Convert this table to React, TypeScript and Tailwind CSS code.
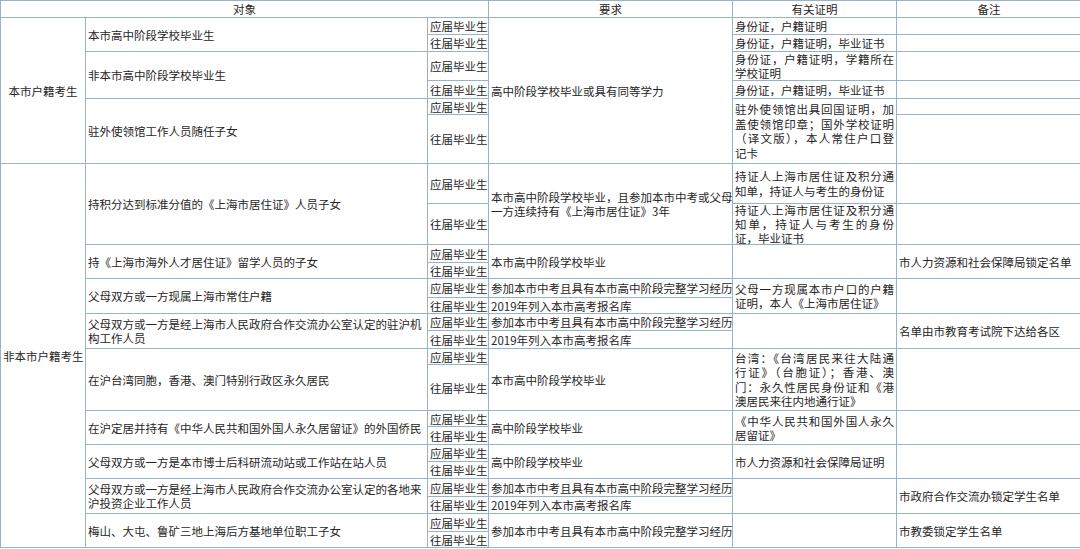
import React from "react";

const B = "border border-[#98b4c4]";
const td = `${B} px-[2px] py-0 whitespace-nowrap`;

function Lines({ lines, squeeze }: { lines: string[]; squeeze?: boolean }) {
  return (
    <div className={squeeze ? "leading-[14px] -my-[2px]" : "leading-[14.5px]"}>
      {lines.map((l, i) => (
        <div
          key={i}
          className={
            i < lines.length - 1 ? "text-justify [text-align-last:justify]" : "text-left"
          }
        >
          {l}
        </div>
      ))}
    </div>
  );
}

const Y = () => <td className={td}>应届毕业生</td>;
const W = () => <td className={td}>往届毕业生</td>;
const E = ({ rs = 1 }: { rs?: number }) => <td rowSpan={rs} className={td}></td>;

export default function App() {
  return (
    <div className="w-[1080px] h-[549px] overflow-hidden bg-white">
      <table
        className="table-fixed border-collapse w-[1081px] text-[11.5px] leading-[14px] text-[#262626]"
        style={{ fontFamily: "'Noto Sans CJK SC', 'Noto Sans', sans-serif" }}
      >
        <colgroup>
          <col className="w-[85px]" />
          <col className="w-[342px]" />
          <col className="w-[61px]" />
          <col className="w-[244px]" />
          <col className="w-[164px]" />
          <col className="w-[185px]" />
        </colgroup>
        <tbody>
          {/* header */}
          <tr className="h-[17px]">
            <td colSpan={3} className={`${td} text-center`}>对象</td>
            <td className={`${td} text-center`}>要求</td>
            <td className={`${td} text-center`}>有关证明</td>
            <td className={`${td} text-center`}>备注</td>
          </tr>

          {/* 本市户籍考生 */}
          <tr className="h-[17px]">
            <td rowSpan={6} className={`${td} text-center`}>本市户籍考生</td>
            <td rowSpan={2} className={td}>本市高中阶段学校毕业生</td>
            <Y />
            <td rowSpan={6} className={td}>高中阶段学校毕业或具有同等学力</td>
            <td className={td}>身份证，户籍证明</td>
            <E />
          </tr>
          <tr className="h-[17px]">
            <W />
            <td className={td}>身份证，户籍证明，毕业证书</td>
            <E />
          </tr>
          <tr className="h-[29px]">
            <td rowSpan={2} className={td}>非本市高中阶段学校毕业生</td>
            <Y />
            <td className={td}>
              <Lines squeeze lines={["身份证，户籍证明，学籍所在", "学校证明"]} />
            </td>
            <E />
          </tr>
          <tr className="h-[18px]">
            <W />
            <td className={td}>身份证，户籍证明，毕业证书</td>
            <E />
          </tr>
          <tr className="h-[16px]">
            <td rowSpan={2} className={td}>驻外使领馆工作人员随任子女</td>
            <Y />
            <td rowSpan={2} className={td}>
              <Lines
                lines={[
                  "驻外使领馆出具回国证明，加",
                  "盖使领馆印章；国外学校证明",
                  "（译文版），本人常住户口登",
                  "记卡",
                ]}
              />
            </td>
            <E />
          </tr>
          <tr className="h-[49px]">
            <W />
            <E />
          </tr>

          {/* 非本市户籍考生 */}
          <tr className="h-[40px]">
            <td rowSpan={18} className={`${td} text-center`}>非本市户籍考生</td>
            <td rowSpan={2} className={td}>持积分达到标准分值的《上海市居住证》人员子女</td>
            <Y />
            <td rowSpan={2} className={td}>
              本市高中阶段学校毕业，且参加本市中考或父母
              <br />
              一方连续持有《上海市居住证》3年
            </td>
            <td className={td}>
              <Lines lines={["持证人上海市居住证及积分通", "知单，持证人与考生的身份证"]} />
            </td>
            <E />
          </tr>
          <tr className="h-[41px]">
            <W />
            <td className={td}>
              <Lines
                squeeze
                lines={["持证人上海市居住证及积分通", "知单，持证人与考生的身份", "证，毕业证书"]}
              />
            </td>
            <E />
          </tr>
          <tr className="h-[18px]">
            <td rowSpan={2} className={td}>持《上海市海外人才居住证》留学人员的子女</td>
            <Y />
            <td rowSpan={2} className={td}>本市高中阶段学校毕业</td>
            <E rs={2} />
            <td rowSpan={2} className={td}>市人力资源和社会保障局锁定名单</td>
          </tr>
          <tr className="h-[16px]">
            <W />
          </tr>
          <tr className="h-[19px]">
            <td rowSpan={2} className={td}>父母双方或一方现属上海市常住户籍</td>
            <Y />
            <td className={td}>参加本市中考且具有本市高中阶段完整学习经历</td>
            <td rowSpan={2} className={td}>
              <Lines squeeze lines={["父母一方现属本市户口的户籍", "证明，本人《上海市居住证》"]} />
            </td>
            <E rs={2} />
          </tr>
          <tr className="h-[16px]">
            <W />
            <td className={td}>2019年列入本市高考报名库</td>
          </tr>
          <tr className="h-[17px]">
            <td rowSpan={2} className={td}>
              父母双方或一方是经上海市人民政府合作交流办公室认定的驻沪机
              <br />
              构工作人员
            </td>
            <Y />
            <td className={td}>参加本市中考且具有本市高中阶段完整学习经历</td>
            <E rs={2} />
            <td rowSpan={2} className={td}>名单由市教育考试院下达给各区</td>
          </tr>
          <tr className="h-[18px]">
            <W />
            <td className={td}>2019年列入本市高考报名库</td>
          </tr>
          <tr className="h-[16px]">
            <td rowSpan={2} className={td}>在沪台湾同胞，香港、澳门特别行政区永久居民</td>
            <Y />
            <td rowSpan={2} className={td}>本市高中阶段学校毕业</td>
            <td rowSpan={2} className={td}>
              <Lines
                lines={[
                  "台湾：《台湾居民来往大陆通",
                  "行证》（台胞证）；香港、澳",
                  "门：永久性居民身份证和《港",
                  "澳居民来往内地通行证》",
                ]}
              />
            </td>
            <E rs={2} />
          </tr>
          <tr className="h-[46px]">
            <W />
          </tr>
          <tr className="h-[16px]">
            <td rowSpan={2} className={td}>在沪定居并持有《中华人民共和国外国人永久居留证》的外国侨民</td>
            <Y />
            <td rowSpan={2} className={td}>高中阶段学校毕业</td>
            <td rowSpan={2} className={td}>
              <Lines squeeze lines={["《中华人民共和国外国人永久", "居留证》"]} />
            </td>
            <E rs={2} />
          </tr>
          <tr className="h-[18px]">
            <W />
          </tr>
          <tr className="h-[17px]">
            <td rowSpan={2} className={td}>父母双方或一方是本市博士后科研流动站或工作站在站人员</td>
            <Y />
            <td rowSpan={2} className={td}>高中阶段学校毕业</td>
            <td rowSpan={2} className={td}>市人力资源和社会保障局证明</td>
            <E rs={2} />
          </tr>
          <tr className="h-[17px]">
            <W />
          </tr>
          <tr className="h-[18px]">
            <td rowSpan={2} className={td}>
              父母双方或一方是经上海市人民政府合作交流办公室认定的各地来
              <br />
              沪投资企业工作人员
            </td>
            <Y />
            <td className={td}>参加本市中考且具有本市高中阶段完整学习经历</td>
            <E rs={2} />
            <td rowSpan={2} className={td}>市政府合作交流办锁定学生名单</td>
          </tr>
          <tr className="h-[17px]">
            <W />
            <td className={td}>2019年列入本市高考报名库</td>
          </tr>
          <tr className="h-[18px]">
            <td rowSpan={2} className={td}>梅山、大屯、鲁矿三地上海后方基地单位职工子女</td>
            <Y />
            <td rowSpan={2} className={td}>参加本市中考且具有本市高中阶段完整学习经历</td>
            <E rs={2} />
            <td rowSpan={2} className={td}>市教委锁定学生名单</td>
          </tr>
          <tr className="h-[16px]">
            <W />
          </tr>
        </tbody>
      </table>
    </div>
  );
}
